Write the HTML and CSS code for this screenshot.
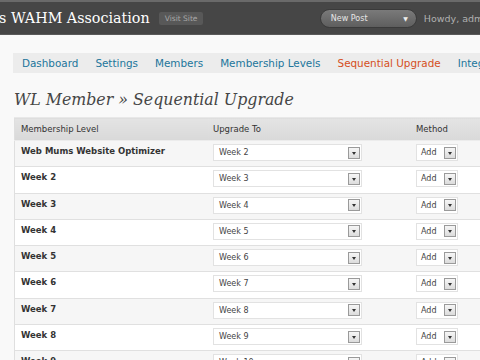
FILE: index.html
```html
<!DOCTYPE html>
<html>
<head>
<meta charset="utf-8">
<link rel="stylesheet" href="styles.css">
</head>
<body>
<header class="top">
  <div class="site">
    <span class="site-name">s WAHM Association</span>
    <span class="visit">Visit Site</span>
  </div>
  <div class="right">
    <div class="newpost"><span>New Post</span><span class="np-arrow">▼</span></div>
    <span class="howdy">Howdy, admin</span>
  </div>
</header>
<nav class="nav">
  <a>Dashboard</a>
  <a>Settings</a>
  <a>Members</a>
  <a>Membership Levels</a>
  <a class="current">Sequential Upgrade</a>
  <a>Integration</a>
</nav>
<h2 class="title">WL Member » Sequential Upgrade</h2>
<table class="grid">
  <thead>
    <tr><th class="c1">Membership Level</th><th class="c2">Upgrade To</th><th class="c3">Method</th></tr>
  </thead>
  <tbody>
    <tr><td class="lvl">Web Mums Website Optimizer</td><td><div class="sel"><span>Week 2</span><i class="btn"></i></div></td><td><div class="sel small"><span>Add</span><i class="btn"></i></div></td></tr>
    <tr><td class="lvl">Week 2</td><td><div class="sel"><span>Week 3</span><i class="btn"></i></div></td><td><div class="sel small"><span>Add</span><i class="btn"></i></div></td></tr>
    <tr><td class="lvl">Week 3</td><td><div class="sel"><span>Week 4</span><i class="btn"></i></div></td><td><div class="sel small"><span>Add</span><i class="btn"></i></div></td></tr>
    <tr><td class="lvl">Week 4</td><td><div class="sel"><span>Week 5</span><i class="btn"></i></div></td><td><div class="sel small"><span>Add</span><i class="btn"></i></div></td></tr>
    <tr><td class="lvl">Week 5</td><td><div class="sel"><span>Week 6</span><i class="btn"></i></div></td><td><div class="sel small"><span>Add</span><i class="btn"></i></div></td></tr>
    <tr><td class="lvl">Week 6</td><td><div class="sel"><span>Week 7</span><i class="btn"></i></div></td><td><div class="sel small"><span>Add</span><i class="btn"></i></div></td></tr>
    <tr><td class="lvl">Week 7</td><td><div class="sel"><span>Week 8</span><i class="btn"></i></div></td><td><div class="sel small"><span>Add</span><i class="btn"></i></div></td></tr>
    <tr><td class="lvl">Week 8</td><td><div class="sel"><span>Week 9</span><i class="btn"></i></div></td><td><div class="sel small"><span>Add</span><i class="btn"></i></div></td></tr>
    <tr><td class="lvl">Week 9</td><td><div class="sel"><span>Week 10</span><i class="btn"></i></div></td><td><div class="sel small"><span>Add</span><i class="btn"></i></div></td></tr>
  </tbody>
</table>
</body>
</html>
```

FILE: styles.css
```css
html, body { margin: 0; padding: 0; }
body {
  width: 480px;
  height: 360px;
  overflow: hidden;
  background: #f9f9f9;
  font-family: "DejaVu Sans", Verdana, sans-serif;
}
.top {
  height: 32px;
  background: #464646;
  border-top: 2px solid #6a6a6a;
  border-bottom: 1px solid #5a5a5a;
  display: flex;
  align-items: center;
  white-space: nowrap;
}
.site { display: flex; align-items: center; margin-left: -1px; }
.site-name {
  font-family: "DejaVu Serif", Georgia, serif;
  font-size: 14.3px;
  color: #ffffff;
}
.visit {
  margin-left: 9px;
  background: #585858;
  color: #a8a8a8;
  font-size: 7.5px;
  padding: 2px 6px;
  border-radius: 2px;
}
.right { display: flex; align-items: center; margin-left: auto; margin-right: -12px; }
.newpost {
  width: 97px;
  height: 19px;
  box-sizing: border-box;
  border-radius: 10px;
  background: linear-gradient(#7a7a7a, #5e5e5e);
  border: 1px solid #3a3a3a;
  display: flex;
  align-items: center;
  justify-content: space-between;
  padding: 0 8px 0 10px;
  color: #e6e6e6;
  font-size: 8px;
}
.np-arrow { font-size: 6px; color: #eee; }
.howdy { margin-left: 7px; color: #b0b0b0; font-size: 9.5px; }

.nav {
  margin: 18px 0 0 13px;
  height: 20px;
  background: #ececec;
  display: flex;
  align-items: center;
  padding-left: 9px;
  gap: 17px;
  white-space: nowrap;
  font-size: 10.4px;
}
.nav a { color: #21759b; }
.nav a.current { color: #d54e21; }

.title {
  margin: 14px 0 0 14px;
  font-family: "DejaVu Serif", Georgia, serif;
  font-style: italic;
  font-weight: normal;
  font-size: 15.8px;
  color: #464646;
  height: 24px;
  line-height: 25px;
}
.grid {
  margin: 6px 0 0 14px;
  border-collapse: collapse;
  width: 500px;
  border-left: 1px solid #dfdfdf;
}
.grid th {
  height: 22px;
  padding: 0 0 0 6px;
  text-align: left;
  font-weight: normal;
  font-size: 8.5px;
  color: #333;
  background: linear-gradient(#e4e4e4, #d9d9d9);
  border-top: 1px solid #e8e8e8;
}
.c1 { width: 186px; }
.c2 { width: 197px; }
.grid td {
  height: 26.3px;
  box-sizing: border-box;
  padding: 3px 0 0 6px;
  border-top: 1px solid #ececec;
  border-bottom: 1px solid #e0e0e0;
  vertical-align: top;
}
.grid tbody tr:nth-child(odd) td { background: #f6f6f6; }
.grid tbody tr:nth-child(even) td { background: #ffffff; }
.lvl { font-size: 8.5px; font-weight: bold; color: #333; line-height: 15px; }
.sel {
  width: 149px;
  height: 17px;
  box-sizing: border-box;
  background: #fff;
  border: 1px solid #e2e2e2;
  display: flex;
  align-items: center;
  justify-content: space-between;
  padding: 0 1px 0 5px;
  font-size: 8px;
  color: #444;
}
.sel.small { width: 42px; padding-left: 4px; }
.btn {
  width: 12px;
  height: 12px;
  box-sizing: border-box;
  border: 1px solid #9a9a9a;
  background: linear-gradient(#f6f6f6, #dcdcdc);
  position: relative;
}
.btn::after {
  content: "";
  position: absolute;
  left: 2.5px;
  top: 4px;
  border-left: 2.5px solid transparent;
  border-right: 2.5px solid transparent;
  border-top: 3px solid #333;
}
```
